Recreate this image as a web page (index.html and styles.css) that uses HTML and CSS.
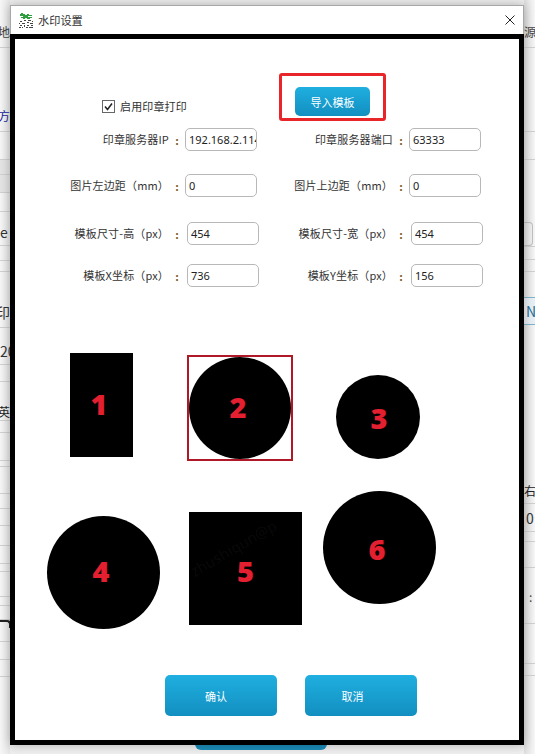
FILE: index.html
```html
<!DOCTYPE html>
<html lang="zh-CN">
<head>
<meta charset="utf-8">
<title>水印设置</title>
<link rel="stylesheet" href="styles.css">
</head>
<body>
<div class="backdrop">
  <div class="strip strip-left">
    <div class="cell cell-end cell-low">地</div>
    <div class="cell cell-end cell-low link">的方</div>
    <div class="cell"></div>
    <div class="cell shade"></div>
    <div class="cell shade"></div>
    <div class="cell"></div>
    <div class="cell cell-low cell-e big">e</div>
    <div class="cell"></div>
    <div class="cell"></div>
    <div class="cell cell-end cell-low big">打印</div>
    <div class="cell cell-low cell-20 big">20</div>
    <div class="cell"></div>
    <div class="cell cell-end cell-low cell-ying dark">英</div>
    <div class="cell"></div>
    <div class="cell"></div>
    <div class="cell"></div>
    <div class="cell"></div>
    <div class="cell"></div>
    <div class="cell"></div>
    <div class="cell"></div>
    <div class="cell"></div>
    <div class="cell"></div>
    <div class="cell"></div>
    <div class="cell"></div>
    <div class="cell"></div>
    <div class="cell"><span class="tab"></span></div>
    <div class="cell"></div>
    <div class="cell"></div>
    <div class="cell cell-open"></div>
  </div>
  <div class="behind">
    <div class="behind-button"></div>
  </div>
  <div class="strip strip-right">
    <div class="cell cell-low">源</div>
    <div class="cell"></div>
    <div class="cell"></div>
    <div class="cell cell-open"></div>
    <div class="cell"><span class="ghost-input"></span></div>
    <div class="cell"></div>
    <div class="cell"></div>
    <div class="cell cell-open"></div>
    <div class="cell pill">N</div>
    <div class="cell cell-open"></div>
    <div class="cell cell-low cell-you dark">右</div>
    <div class="cell cell-mid cell-zero big">0</div>
    <div class="cell"></div>
    <div class="cell"></div>
    <div class="cell cell-low colon-cell">:</div>
    <div class="cell"></div>
    <div class="cell"></div>
    <div class="cell cell-open"></div>
  </div>
</div>

<div class="dialog">
  <div class="titlebar">
    <svg class="app-icon" viewBox="0 0 15 15" aria-hidden="true">
      <path class="icon-green" d="M2 0h2v1h2v1h2V1h2v1h3v1H9v1h4v1h-2v1H8V5H6v1H4V5H2V4h2V3H1V1h1z"/>
      <path class="icon-dark" d="M1 8h2v1H1zM5 7h2v1H5zM9 7h3v1H9zM13 8h1v1h-1zM0 10h1v1H0zM3 10h3v1H3zM8 9h2v1H8zM11 10h3v1h-3zM1 12h2v1H1zM5 12h1v2H5zM8 12h2v1H8zM12 12h2v1h-2zM0 14h2v1H0zM3 14h1v1H3zM7 14h2v1H7zM10 14h4v1h-4z"/>
    </svg>
    <span class="title">水印设置</span>
    <svg class="close" viewBox="0 0 10 10" aria-hidden="true"><path d="M.5.5l9 9M9.500.5l-9 9"/></svg>
  </div>
  <div class="frame">
    <div class="head">
      <label class="check">
        <svg class="box" viewBox="0 0 13 13" aria-hidden="true">
          <rect x=".5" y=".5" width="12" height="12"/>
          <path d="M3 6.500l2.500 3L10 3.500"/>
        </svg>
        <span class="name">启用印章打印</span>
      </label>
      <div class="highlight"><button class="btn btn-import" type="button">导入模板</button></div>
    </div>

    <div class="row row-a">
      <label class="field"><span class="name">印章服务器IP</span><span class="colon">:</span><input class="input" value="192.168.2.114"></label>
      <label class="field"><span class="name">印章服务器端口</span><span class="colon">:</span><input class="input" value="63333"></label>
    </div>
    <div class="row row-b">
      <label class="field"><span class="name">图片左边距（mm）</span><span class="colon">:</span><input class="input" value="0"></label>
      <label class="field"><span class="name">图片上边距（mm）</span><span class="colon">:</span><input class="input" value="0"></label>
    </div>
    <div class="row row-c">
      <label class="field"><span class="name">模板尺寸-高（px）</span><span class="colon">:</span><input class="input" value="454"></label>
      <label class="field"><span class="name">模板尺寸-宽（px）</span><span class="colon">:</span><input class="input" value="454"></label>
    </div>
    <div class="row row-d">
      <label class="field"><span class="name">模板X坐标（px）</span><span class="colon">:</span><input class="input" value="736"></label>
      <label class="field"><span class="name">模板Y坐标（px）</span><span class="colon">:</span><input class="input" value="156"></label>
    </div>

    <div class="canvas">
      <div class="shape s1"><span>1</span></div>
      <div class="selected"></div>
      <div class="shape round s2"><span>2</span></div>
      <div class="shape round s3"><span>3</span></div>
      <div class="shape round s4"><span>4</span></div>
      <div class="shape s5"><em class="mark">zhushiqun@p</em><span>5</span></div>
      <div class="shape round s6"><span>6</span></div>
    </div>

    <div class="actions">
      <button class="btn btn-big btn-ok" type="button">确认</button>
      <button class="btn btn-big btn-cancel" type="button">取消</button>
    </div>
  </div>
</div>
</body>
</html>
```
FILE: styles.css
```css
* { box-sizing: border-box; }
html, body { margin: 0; padding: 0; }
body {
  position: relative;
  width: 535px;
  height: 754px;
  overflow: hidden;
  background: #f6f6f6;
  font-family: "Noto Sans CJK SC", "Noto Sans", sans-serif;
  font-size: 11px;
  color: #333;
}

/* page behind the dialog */
.backdrop { display: flex; width: 535px; height: 754px; }
.behind { flex: 1; display: flex; flex-direction: column; justify-content: flex-end; background: #efefef; }
.behind-button {
  width: 132px;
  height: 9px;
  margin: 0 0 4px 185px;
  border-radius: 0 0 6px 6px;
  background: #1b8db9;
}
.strip { display: grid; overflow: hidden; flex: none; }
.strip-left {
  width: 10px;
  background: linear-gradient(to right, #f7f7f7, #e6e6e6);
  grid-template-rows: 48px 84px 28px 15px 18px 19px 34px 15px 11px 56px 37px 17px 39px 12px 28px 6px 27px 15px 17px 20px 18px 8px 25px 9px 14px 22px 18px 17px 77px;
}
.strip-right {
  width: 11px;
  background: linear-gradient(to left, #f7f7f7, #dedede);
  grid-template-rows: 48px 84px 28px 62px 25px 13px 12px 25px 28px 159px 20px 28px 10px 26px 56px 40px 12px 78px;
}
.cell {
  display: flex;
  min-width: 0;
  white-space: nowrap;
  overflow: hidden;
  border-bottom: 1px solid #d0d0d0;
  color: #444;
  line-height: 14px;
}
.cell-open { border-bottom: 0; }
.cell-end { justify-content: flex-end; }
.cell-low { align-items: flex-end; padding-bottom: 8px; font-size: 12px; }
.cell-mid { align-items: center; }
.cell-e { padding-bottom: 6px; }
.cell-20 { padding-bottom: 6px; }
.cell-ying { padding-bottom: 1px; }
.cell-you { padding-bottom: 5px; padding-left: 0; }
.cell-zero { padding-left: 2px; }
.big { font-size: 14px; color: #333; }
.dark { color: #222; }
.link { color: #1c1ca0; }
.shade { background: #e4e4e4; }
.tab {
  display: block;
  width: 10px;
  height: 22px;
  border-bottom: 1px solid #222;
}
.tab::before {
  content: "";
  display: block;
  width: 9px;
  height: 6px;
  border-top: 2px solid #222;
  border-right: 2px solid #222;
  border-radius: 0 4px 0 0;
}
.ghost-input {
  display: block;
  width: 10px;
  height: 24px;
  border: 1px solid #c0c0c0;
  border-left: 0;
  border-radius: 0 4px 4px 0;
  margin-left: -1px;
}
.pill {
  align-items: center;
  padding-left: 2px;
  font-size: 14px;
  color: #1f6f96;
  background: #e8eff5;
  border-top: 1px solid #7fb5cc;
  border-bottom: 1px solid #7fb5cc;
}
.colon-cell { padding-left: 5px; font-size: 12px; padding-bottom: 19px; }

/* dialog */
.dialog {
  position: absolute;
  left: 10px;
  top: 5px;
  width: 514px;
  height: 740px;
  background: #fff;
  box-shadow: 0 0 10px rgba(0, 0, 0, .28);
}
.titlebar {
  display: flex;
  align-items: center;
  height: 29px;
  padding: 0 8px 0 8px;
  border: 1px solid #a8a8a8;
  border-bottom: 0;
  background: #fff;
}
.app-icon { width: 15px; height: 15px; flex: none; }
.icon-green { fill: #2f9e3f; }
.icon-dark { fill: #444; }
.title { margin-left: 4px; padding-bottom: 1px; font-size: 11.200px; color: #333; }
.close {
  width: 10px;
  height: 10px;
  margin-left: auto;
  fill: none;
  stroke: #222;
  stroke-width: 1;
}
.frame {
  height: 711px;
  border: 5px solid #000;
  background: #fff;
}

.head { display: flex; align-items: flex-start; padding-top: 34px; }
.check {
  display: flex;
  align-items: center;
  gap: 5px;
  margin: 27px 0 0 87px;
  height: 13px;
  color: #333;
}
.box { width: 13px; height: 13px; flex: none; fill: #fff; }
.box rect { stroke: #666; }
.box path { fill: none; stroke: #222; stroke-width: 1.500; }
.highlight {
  width: 107px;
  height: 48px;
  margin-left: 92px;
  padding: 11px 13px 0 13px;
  border: 3px solid #e8262a;
  border-radius: 3px;
}

.btn {
  display: block;
  padding: 0;
  border: 0;
  color: #fff;
  font: inherit;
  background: linear-gradient(to bottom, #1fafe0, #128fc0);
}
.btn-import { width: 75px; height: 29px; border-radius: 5px; }
.btn-big { width: 112px; height: 41px; border-radius: 5px; }
.btn-ok { padding-right: 10px; }
.btn-cancel { padding-right: 17px; }

.row { display: flex; width: 466px; }
.row-a { margin: 7px 0 0 0; }
.row-b { margin: 23px 0 0 0; }
.row-c { margin: 25px 0 0 2px; }
.row-d { margin: 19px 0 0 2px; }
.field {
  display: flex;
  align-items: center;
  justify-content: flex-end;
  flex: none;
  width: 224px;
}
.row .field:first-child { width: 242px; }
.name { padding-bottom: 2px; white-space: nowrap; color: #333; letter-spacing: .15px; }
.colon { width: 16px; text-align: center; font-weight: 700; color: #7a5a20; }
.row-c .colon, .row-d .colon { width: 18px; padding-right: 2px; }
.input {
  width: 72px;
  height: 23px;
  padding: 0 0 1px 3px;
  border: 1px solid #b8b8b8;
  border-radius: 5px;
  background: #fff;
  font: 11px "Noto Sans", sans-serif;
  color: #222;
  outline: 0;
}

/* free canvas of the stamp shapes: coordinates are the content */
.canvas { position: relative; height: 388px; }
.shape {
  position: absolute;
  display: flex;
  align-items: center;
  justify-content: center;
  overflow: hidden;
  background: #000;
  color: #e31f30;
  font: 900 29px/1 "Noto Sans", sans-serif;
}
.round { border-radius: 50%; }
.s1 { left: 55px; top: 66px; width: 63px; height: 104px; padding: 0 5px 4px 0; }
.s2 { left: 174px; top: 70px; width: 102px; height: 102px; padding: 0 4px 4px 0; }
.s3 { left: 321px; top: 88px; width: 84px; height: 84px; padding: 0 0 0 2px; }
.s4 { left: 32px; top: 229px; width: 113px; height: 113px; padding: 0 5px 4px 0; }
.s5 { left: 174px; top: 225px; width: 113px; height: 113px; padding: 3px 0 0 0; }
.s6 { left: 308px; top: 204px; width: 113px; height: 113px; padding: 1px 5px 0 0; }
.selected {
  position: absolute;
  left: 172px;
  top: 68px;
  width: 106px;
  height: 106px;
  border: 2px solid #b01828;
}
.mark {
  position: absolute;
  left: -4px;
  top: 26px;
  transform: rotate(-30deg);
  font: 400 15px "Noto Sans", sans-serif;
  color: rgba(255, 255, 255, .05);
  white-space: nowrap;
}

.actions { display: flex; gap: 28px; padding-left: 150px; }
```
